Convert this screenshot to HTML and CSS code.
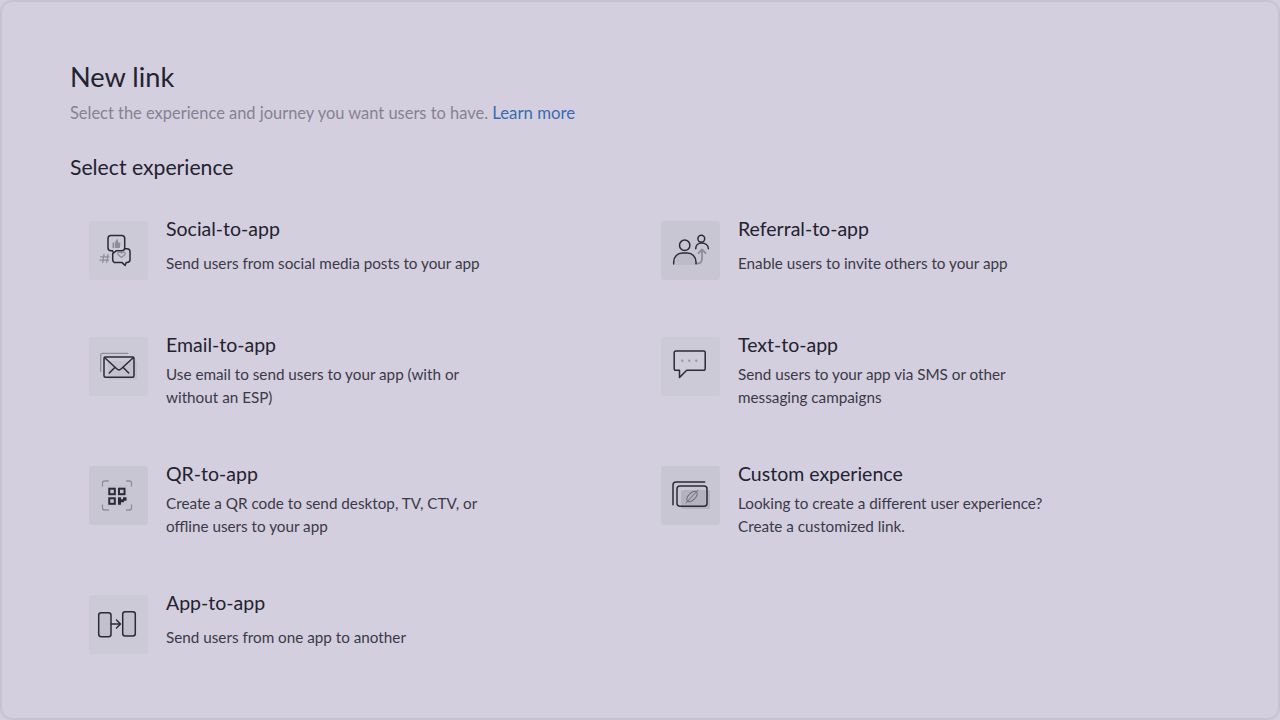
FILE: index.html
```html
<!DOCTYPE html>
<html lang="en">
<head>
<meta charset="utf-8">
<title>New link</title>
<link rel="stylesheet" href="styles.css">
</head>
<body>
<main class="panel">
  <h1 class="title">New link</h1>
  <p class="subtitle">Select the experience and journey you want users to have. <a class="link" href="#">Learn more</a></p>
  <h2 class="section">Select experience</h2>
  <div class="grid">
    <div class="item">
      <div class="tile">
        <svg class="icon" viewBox="0 0 59 59" fill="none">
          <path class="g" d="M15 33.500l-1.200 8M19 33.500l-1.200 8M11.500 35.800h8.500M11 39.200h8.500"/>
          <path class="s" d="M22 14.500h10.700a3 3 0 0 1 3 3v9.200a3 3 0 0 1-3 3H27.500l-2.900 2.300-1.200-2.300H22a3 3 0 0 1-3-3v-9.200a3 3 0 0 1 3-3z"/>
          <path class="s" d="M35.700 27.800H38a3 3 0 0 1 3 3v7.800a3 3 0 0 1-3 3h-.8l-1.100 2.800-3-2.800h-6.500a3 3 0 0 1-2.900-2.500v-6.500"/>
          <path class="gf" d="M23.500 21.500h1.800v5.500h-1.800zM26 21.500l2-3.500c1 0 1.300 1 1 3.500h2.500l-.7 5.500H26z"/>
          <path class="g" d="M32.500 36.500l-3.200-2.800c-1.600-1.800.8-3.600 3.200-1.600 2.400-2 4.800-.2 3.200 1.600z"/>
        </svg>
      </div>
      <div class="body">
        <h3 class="name">Social-to-app</h3>
        <p class="desc single">Send users from social media posts to your app</p>
      </div>
    </div>
    <div class="item">
      <div class="tile dark">
        <svg class="icon" viewBox="0 0 59 59" fill="none">
          <path class="fill" d="M14.500 44v-5c0-4 3-7 7-7h6c4 0 7 3 7 7v5z"/>
          <path class="gthick" d="M35.300 42.700c3.700 0 5.700-1.500 5.700-5v-9M37.500 32l3.500-3.500 3.500 3.500"/>
          <circle class="s" cx="23.700" cy="24.300" r="5.200"/>
          <path class="s" d="M12.700 43v-2c0-5.500 4-9 8.500-9h5.300c4.500 0 8.500 3.500 8.500 9v1.700"/>
          <circle class="s" cx="40.300" cy="17.700" r="3.400"/>
          <path class="s" d="M34.700 27.700c0-3.500 2.500-5.700 6-5.700s6.700 2.200 6.700 5.700"/>
        </svg>
      </div>
      <div class="body">
        <h3 class="name">Referral-to-app</h3>
        <p class="desc single">Enable users to invite others to your app</p>
      </div>
    </div>
    <div class="item">
      <div class="tile">
        <svg class="icon" viewBox="0 0 59 59" fill="none">
          <rect class="shade" x="19" y="24" width="29.300" height="18.700" rx="1.500"/>
          <path class="g" d="M11.700 34.300V18.300a2 2 0 0 1 2-2h25"/>
          <rect class="s" x="15" y="20" width="30" height="20.300" rx="1.500"/>
          <path class="s" d="M15.500 20.500L28 32a3 3 0 0 0 4 0l12.500-11.500M20.300 36l5.700-5.700M39.700 36L34 30.300"/>
        </svg>
      </div>
      <div class="body">
        <h3 class="name">Email-to-app</h3>
        <p class="desc">Use email to send users to your app (with or<br>without an ESP)</p>
      </div>
    </div>
    <div class="item">
      <div class="tile">
        <svg class="icon" viewBox="0 0 59 59" fill="none">
          <path class="shadebubble" d="M14 15h30v18H14z"/>
          <path class="s" d="M14.700 14h28a1.500 1.500 0 0 1 1.500 1.500v16.300a1.500 1.500 0 0 1-1.500 1.500H25.700L18.500 40.500v-7.200h-3.800a1.500 1.500 0 0 1-1.500-1.500V15.500a1.500 1.500 0 0 1 1.500-1.500z"/>
          <circle class="dot" cx="21.300" cy="23.700" r="1.200"/>
          <circle class="dot" cx="28.300" cy="23.700" r="1.200"/>
          <circle class="dot" cx="35.300" cy="23.700" r="1.200"/>
        </svg>
      </div>
      <div class="body">
        <h3 class="name">Text-to-app</h3>
        <p class="desc">Send users to your app via SMS or other<br>messaging campaigns</p>
      </div>
    </div>
    <div class="item">
      <div class="tile dark">
        <svg class="icon" viewBox="0 0 59 59" fill="none">
          <rect class="qrbg" x="18" y="19" width="21" height="22"/>
          <path class="g" d="M13.500 20v-3a2 2 0 0 1 2-2h4M37.500 15h3a2 2 0 0 1 2 2v3M42.500 39v3a2 2 0 0 1-2 2h-3M19.500 44h-4a2 2 0 0 1-2-2v-3"/>
          <rect class="qr" x="20.300" y="22.700" width="5.500" height="5.500"/>
          <rect class="qr" x="30" y="22.700" width="5.500" height="5.500"/>
          <rect class="qr" x="20.300" y="32.300" width="5.500" height="5.500"/>
          <path class="qrf" d="M29 31.300h3v2h2v-2h3.500v3.500H35v1.500h-3v2.500h-3z"/>
        </svg>
      </div>
      <div class="body">
        <h3 class="name">QR-to-app</h3>
        <p class="desc">Create a QR code to send desktop, TV, CTV, or<br>offline users to your app</p>
      </div>
    </div>
    <div class="item">
      <div class="tile dark">
        <svg class="icon" viewBox="0 0 59 59" fill="none">
          <path class="s" d="M12 38.700V19a3 3 0 0 1 3-3h28.700"/>
          <rect class="shadedark" x="20" y="24" width="29" height="19" rx="2"/>
          <rect class="s" x="16" y="20" width="30" height="20.300" rx="3"/>
          <ellipse class="g thin" cx="31" cy="30.500" rx="6.500" ry="3.500" transform="rotate(-45 31 30.500)"/>
          <path class="g thin" d="M25 37l12-13"/>
        </svg>
      </div>
      <div class="body">
        <h3 class="name">Custom experience</h3>
        <p class="desc">Looking to create a different user experience?<br>Create a customized link.</p>
      </div>
    </div>
    <div class="item">
      <div class="tile">
        <svg class="icon" viewBox="0 0 59 59" fill="none">
          <rect class="phone" x="9.700" y="17.700" width="12.300" height="24" rx="2.500"/>
          <rect class="phone" x="33.700" y="16.700" width="12.600" height="24.300" rx="2.500"/>
          <path class="s" d="M22 29h9M27.500 25l4 4-4 4"/>
        </svg>
      </div>
      <div class="body">
        <h3 class="name">App-to-app</h3>
        <p class="desc single">Send users from one app to another</p>
      </div>
    </div>
  </div>
</main>
</body>
</html>
```

FILE: styles.css
```css
* { box-sizing: border-box; }
html, body { margin: 0; height: 100%; }
body {
  width: 1280px;
  height: 720px;
  overflow: hidden;
  background: #d3cfde;
  font-family: "Lato", "Liberation Sans", sans-serif;
  color: #23222f;
}
.panel {
  height: 720px;
  padding: 59px 70px 0 68px;
  background: #d3cfde;
  border: 2px solid #c7c3d6;
  border-radius: 12px;
}
.title {
  margin: 0;
  font-size: 27.2px;
  line-height: 31px;
  font-weight: 400;
}
.subtitle {
  margin: 9px 0 0;
  font-size: 16.45px;
  line-height: 24px;
  font-weight: 400;
  color: #858293;
}
.link { color: #3a6bb0; text-decoration: none; font-size: 16.8px; }
.section {
  margin: 28px 0 0;
  font-size: 21.2px;
  line-height: 28px;
  font-weight: 400;
}
.grid {
  margin-top: 40px;
  margin-left: 19px;
  display: grid;
  grid-template-columns: 572px 1fr;
  row-gap: 57px;
  align-items: start;
}
.item { display: flex; gap: 18px; align-items: flex-start; }
.tile {
  width: 59px;
  height: 59px;
  flex: none;
  background: #cdcad7;
  border-radius: 3px;
}
.tile.dark { background: #c9c6d3; }
.icon { display: block; width: 59px; height: 59px; }
.name {
  margin: 0;
  font-size: 19.5px;
  line-height: 16px;
  font-weight: 400;
}
.desc {
  margin: 10px 0 0;
  font-size: 15.25px;
  line-height: 23px;
  font-weight: 400;
  color: #3a3947;
}
.desc.single { margin-top: 15px; }
.s { stroke: #2b2a38; stroke-width: 1.5; stroke-linejoin: round; stroke-linecap: round; }
.g { stroke: #8f8d9b; stroke-width: 1.3; stroke-linecap: round; stroke-linejoin: round; }
.g.thin { stroke: #6f6d7b; stroke-width: 1; }
.gthick { stroke: #8f8d9b; stroke-width: 1.8; stroke-linecap: round; stroke-linejoin: round; }
.gf { fill: #8f8d9b; }
.fill { fill: #bebbc8; }
.shade { fill: #c4c1ce; }
.shadedark { fill: #b5b2bf; }
.shadebubble { fill: #cfccd9; }
.dot { fill: #9b99a6; }
.qrbg { fill: #c6c3d0; }
.qr { stroke: #2b2a38; stroke-width: 2; }
.qrf { fill: #2b2a38; }
.phone { fill: #c3c0cd; stroke: #2b2a38; stroke-width: 1.5; }
```
